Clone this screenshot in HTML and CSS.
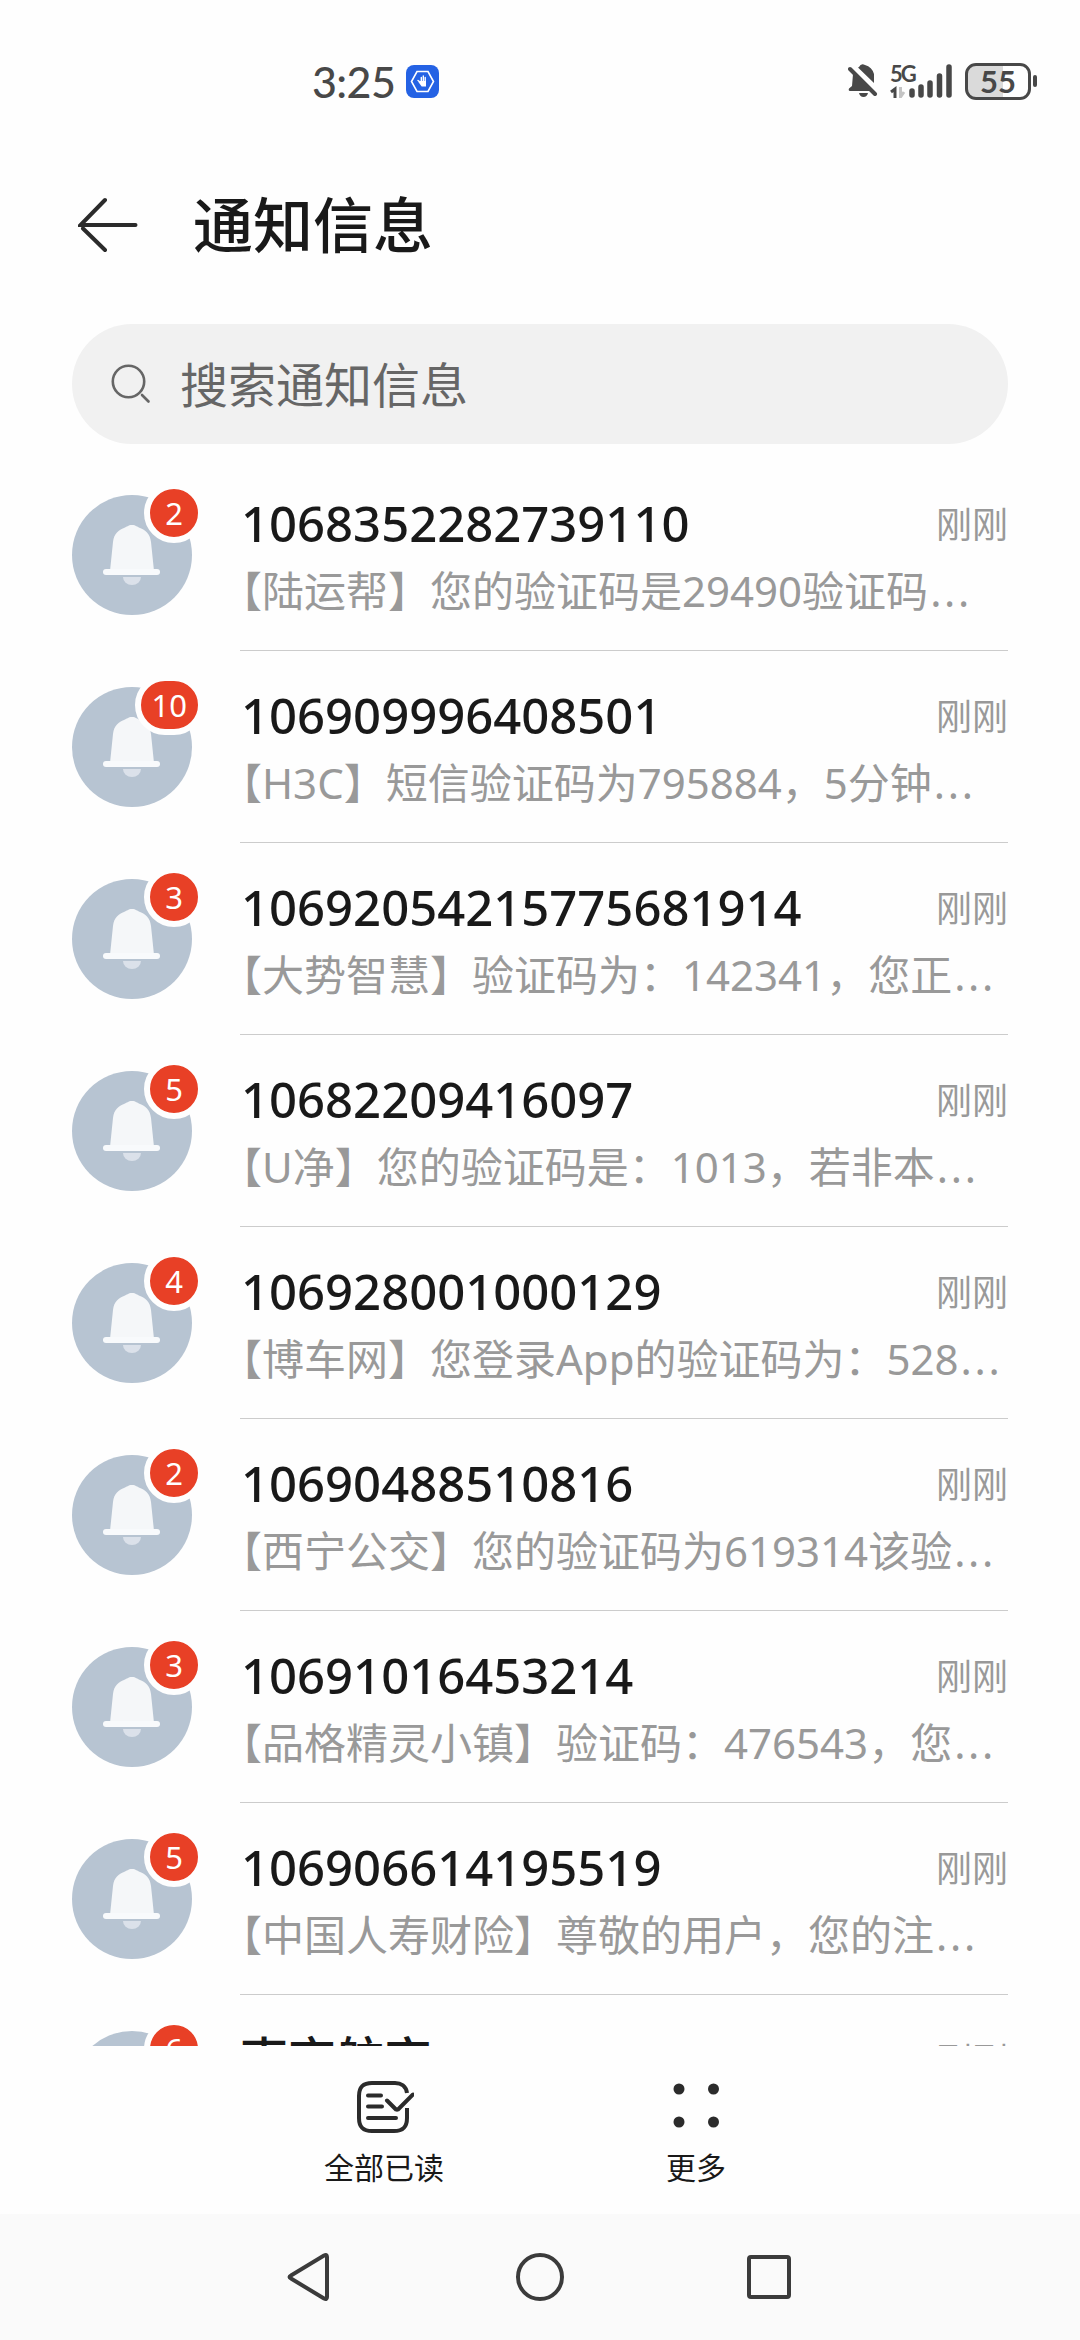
FILE: index.html
```html
<!DOCTYPE html>
<html lang="zh-CN">
<head>
    <meta charset="UTF-8">
    <meta name="viewport" content="width=device-width, initial-scale=1.0">
    <title>通知信息</title>
    <link rel="stylesheet" href="styles.css">
</head>
<body>
    <!-- shared bell avatar -->
    <svg class="defs" width="0" height="0">
        <symbol id="bell" viewBox="0 0 120 120">
            <circle cx="60" cy="60" r="60" fill="#b7c4d2"/>
            <path d="M51 82h18a9 8 0 0 1-18 0z" fill="#dbe1ea"/>
            <path d="M38 76L41 47C42 38 47 35 52 33C55 32 56 30 60 30C64 30 65 32 68 33C73 35 78 38 79 47L82 76z" fill="#f5f7f9"/>
            <rect x="31" y="74" width="57" height="6" rx="3" fill="#f8fafc"/>
        </symbol>
    </svg>

    <div class="status-bar">
        <div class="status-left">
            <span class="clock">3:25</span>
            <svg class="app-icon" viewBox="0 0 33 33">
                <rect width="33" height="33" rx="8" fill="#2462e4"/>
                <path d="M11 6.500h11L27.500 16.500 22 26.500H11L5.500 16.500z" fill="none" stroke="#fff" stroke-width="1.600"/>
                <path d="M12 15.500l3 2M15.300 17v-4.500M17.300 17v-6M19.200 17v-4.500" fill="none" stroke="#fff" stroke-width="1.400" stroke-linecap="round"/>
                <path d="M14.600 16h5.400v5.500h-4.300L12 16.500z" fill="#fff"/>
            </svg>
        </div>
        <div class="status-right">
            <svg class="mute" viewBox="0 0 30 36" fill="#484848">
                <path d="M5 11L22 28H1.500Q0 27 1 25.500L4 23z"/>
                <path d="M11 4Q13 0 17 2Q24 4 26 11V20L10 4.500z"/>
                <path d="M11 30h9q-1 4-4.500 4t-4.500-4z"/>
                <path d="M2 6L27 31" stroke="#484848" stroke-width="4" stroke-linecap="round"/>
            </svg>
            <div class="network">
                <span class="net-type">5G</span>
                <svg class="signal" viewBox="0 0 62 34">
                    <g stroke="#484848" stroke-width="5.500" stroke-linecap="round">
                        <path d="M22 27v4M31 23v8M40 19v12M49.500 12v19M59 3v28"/>
                    </g>
                    <path d="M1 28l4-3v9" fill="none" stroke="#484848" stroke-width="3"/>
                    <path d="M10.500 23v10l3.500-5" fill="none" stroke="#c4c4c4" stroke-width="3"/>
                </svg>
            </div>
            <div class="battery"><span>55</span></div>
            <div class="battery-tip"></div>
        </div>
    </div>

    <header class="title-bar">
        <svg class="back" viewBox="0 0 60 56" fill="none" stroke="#2b2b2b" stroke-width="4" stroke-linecap="round">
            <path d="M27 3L2.500 28H57.500M5 31.500L27 53"/>
        </svg>
        <h1>通知信息</h1>
    </header>

    <div class="search">
        <svg class="search-icon" viewBox="0 0 40 40" fill="none" stroke="#666" stroke-width="2.600">
            <circle cx="17.500" cy="17.500" r="15.700"/>
            <path d="M31 31L37.500 37.500" stroke-linecap="round"/>
        </svg>
        <span>搜索通知信息</span>
    </div>

    <main class="list">
        <div class="item">
            <div class="avatar"><svg><use href="#bell"/></svg><span class="badge">2</span></div>
            <div class="content">
                <div class="top"><h2>1068352282739110</h2><time>刚刚</time></div>
                <p>【陆运帮】您的验证码是29490验证码<span class="dots">...</span></p>
            </div>
        </div>
        <div class="item">
            <div class="avatar"><svg><use href="#bell"/></svg><span class="badge">10</span></div>
            <div class="content">
                <div class="top"><h2>106909996408501</h2><time>刚刚</time></div>
                <p>【H3C】短信验证码为795884，5分钟<span class="dots">...</span></p>
            </div>
        </div>
        <div class="item">
            <div class="avatar"><svg><use href="#bell"/></svg><span class="badge">3</span></div>
            <div class="content">
                <div class="top"><h2>10692054215775681914</h2><time>刚刚</time></div>
                <p>【大势智慧】验证码为：142341，您正<span class="dots">...</span></p>
            </div>
        </div>
        <div class="item">
            <div class="avatar"><svg><use href="#bell"/></svg><span class="badge">5</span></div>
            <div class="content">
                <div class="top"><h2>10682209416097</h2><time>刚刚</time></div>
                <p>【U净】您的验证码是：1013，若非本<span class="dots">...</span></p>
            </div>
        </div>
        <div class="item">
            <div class="avatar"><svg><use href="#bell"/></svg><span class="badge">4</span></div>
            <div class="content">
                <div class="top"><h2>106928001000129</h2><time>刚刚</time></div>
                <p>【博车网】您登录App的验证码为：528<span class="dots">...</span></p>
            </div>
        </div>
        <div class="item">
            <div class="avatar"><svg><use href="#bell"/></svg><span class="badge">2</span></div>
            <div class="content">
                <div class="top"><h2>10690488510816</h2><time>刚刚</time></div>
                <p>【西宁公交】您的验证码为619314该验<span class="dots">...</span></p>
            </div>
        </div>
        <div class="item">
            <div class="avatar"><svg><use href="#bell"/></svg><span class="badge">3</span></div>
            <div class="content">
                <div class="top"><h2>10691016453214</h2><time>刚刚</time></div>
                <p>【品格精灵小镇】验证码：476543，您<span class="dots">...</span></p>
            </div>
        </div>
        <div class="item">
            <div class="avatar"><svg><use href="#bell"/></svg><span class="badge">5</span></div>
            <div class="content">
                <div class="top"><h2>106906614195519</h2><time>刚刚</time></div>
                <p>【中国人寿财险】尊敬的用户，您的注<span class="dots">...</span></p>
            </div>
        </div>
        <div class="item">
            <div class="avatar"><svg><use href="#bell"/></svg><span class="badge">6</span></div>
            <div class="content">
                <div class="top"><h2 class="name-cn">南京航空</h2><time>刚刚</time></div>
            </div>
        </div>
    </main>

    <div class="toolbar">
        <div class="tool">
            <svg viewBox="0 0 60 60" fill="none" stroke="#2b2b2b" stroke-width="4" stroke-linecap="round">
                <path d="M53 15C52 8 47 5 41 5H18C9 5 5 9 5 18V40C5 49 9 53 18 53H40C49 53 53 49 53 40V30" stroke-linecap="butt"/>
                <path d="M14 17.500H27M14 28.500H28M14 40H42M33 22.500L42 31.500Q43 32 44 31.500L59 16.500"/>
            </svg>
            <span>全部已读</span>
        </div>
        <div class="tool">
            <svg viewBox="0 0 60 60" fill="#2b2b2b">
                <circle cx="13" cy="11" r="5.500"/>
                <circle cx="47.500" cy="11" r="5.500"/>
                <circle cx="13" cy="44" r="5.500"/>
                <circle cx="47.500" cy="44" r="5.500"/>
            </svg>
            <span>更多</span>
        </div>
    </div>

    <nav class="nav-bar">
        <svg viewBox="0 0 52 52"><path d="M39 4.500Q42 3 42 6V46Q42 49 39 47.500L6 27.500Q3 26 6 24.500z"/></svg>
        <svg viewBox="0 0 52 52"><circle cx="26" cy="26" r="22"/></svg>
        <svg viewBox="0 0 52 52"><rect x="6" y="6" width="40" height="40" rx="2"/></svg>
    </nav>
</body>
</html>
```
FILE: styles.css
```css
* {
    box-sizing: border-box;
    margin: 0;
    padding: 0;
}

body {
    width: 1080px;
    height: 2340px;
    display: flex;
    flex-direction: column;
    background: #fefefe;
    color: #191919;
    font-family: "Noto Sans", "Noto Sans CJK SC", sans-serif;
    overflow: hidden;
}

svg {
    display: block;
    flex: none;
}

.defs {
    position: absolute;
}

/* status bar */
.status-bar {
    height: 162px;
    padding: 0 43px 0 312px;
    display: flex;
    justify-content: space-between;
    color: #484848;
}

.status-left,
.status-right {
    height: 162px;
    display: flex;
    align-items: center;
}

.clock {
    font-family: Lato, sans-serif;
    font-size: 43px;
    font-weight: 500;
    letter-spacing: -0.6px;
    width: 94px;
}

.app-icon {
    width: 33px;
    height: 33px;
}

.mute {
    width: 30px;
    height: 36px;
    margin-right: 12px;
}

.network {
    position: relative;
    width: 62px;
    height: 34px;
    margin-right: 13px;
}

.net-type {
    position: absolute;
    left: 0;
    top: -1px;
    font: bold 22px/21px Lato, sans-serif;
    letter-spacing: -2px;
}

.signal {
    width: 62px;
    height: 34px;
}

.battery {
    width: 66px;
    height: 37px;
    border: 3px solid #484848;
    border-radius: 11px;
    background: linear-gradient(90deg, #dadada 58%, #fefefe 58%);
    font: bold 31px/31px Lato, sans-serif;
    text-align: center;
}

.battery-tip {
    width: 4px;
    height: 12px;
    margin-left: 2px;
    border-radius: 2px;
    background: #484848;
}

/* title */
.title-bar {
    height: 126px;
    padding: 0 78px;
    display: flex;
    align-items: center;
}

.back {
    width: 60px;
    height: 56px;
    margin-right: 55px;
}

h1 {
    font-size: 60px;
    font-weight: 500;
    line-height: 80px;
}

.search {
    height: 120px;
    margin: 36px 72px 15px;
    padding-left: 39px;
    display: flex;
    align-items: center;
    border-radius: 60px;
    background: #f1f1f1;
    color: #666;
    font-size: 48px;
}

.search span {
    padding-bottom: 5px;
}

.search-icon {
    width: 40px;
    height: 40px;
    margin-right: 29px;
}

/* messages */
.list {
    height: 1587px;
    padding: 0 72px;
    overflow: hidden;
}

.item {
    height: 192px;
    display: flex;
    gap: 48px;
}

.avatar {
    position: relative;
    width: 120px;
    height: 120px;
    margin-top: 36px;
}

.avatar svg {
    width: 120px;
    height: 120px;
}

.badge {
    position: absolute;
    top: -12px;
    right: -12px;
    min-width: 60px;
    height: 60px;
    padding: 0 11px;
    border: 6px solid #fefefe;
    border-radius: 30px;
    background: #e84026;
    color: #fff;
    font-size: 31px;
    line-height: 48px;
    text-align: center;
}

.content {
    width: 768px;
    padding-top: 34px;
    border-bottom: 1px solid #ccc;
}

.top {
    height: 60px;
    display: flex;
    justify-content: space-between;
    align-items: center;
}

h2 {
    margin-left: 1px;
    font-size: 49px;
    font-weight: 500;
    line-height: 60px;
}

.name-cn {
    margin-left: 0;
    font-size: 48px;
}

time {
    padding-bottom: 2px;
    color: #999;
    font-size: 36px;
}

p {
    height: 60px;
    margin-top: 8px;
    color: #999;
    font-size: 42px;
    line-height: 60px;
    white-space: nowrap;
    text-indent: -20px;
}

.dots {
    margin-left: 2px;
    letter-spacing: 2.7px;
}

/* bottom */
.toolbar {
    height: 168px;
    padding: 32px 228px 0;
    display: grid;
    grid-template-columns: 1fr 1fr;
}

.tool {
    display: flex;
    flex-direction: column;
    align-items: center;
    font-size: 30px;
    line-height: 44px;
}

.tool svg {
    width: 60px;
    height: 60px;
    margin-bottom: 8px;
}

.nav-bar {
    height: 126px;
    padding: 0 285px;
    display: flex;
    justify-content: space-between;
    align-items: center;
    background: #fafafa;
}

.nav-bar svg {
    width: 52px;
    height: 52px;
    fill: none;
    stroke: #3b3b3b;
    stroke-width: 4;
}
```
